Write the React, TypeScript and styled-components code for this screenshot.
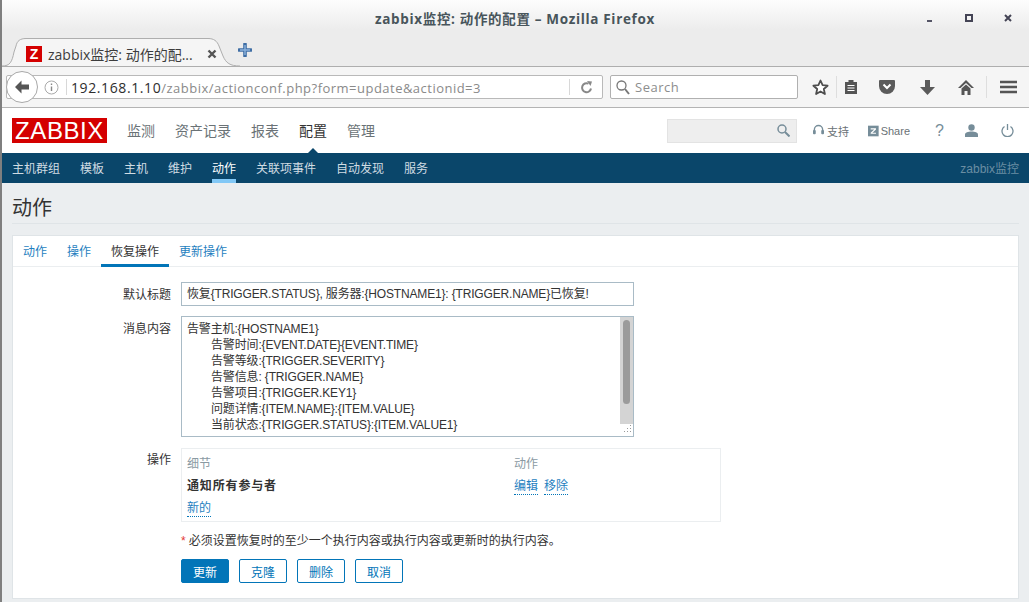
import React from 'react';
import styled, { createGlobalStyle } from 'styled-components';

const UI = `"Liberation Sans", "Noto Sans CJK SC", sans-serif`;
const CHROME = `"Open Sans", "Noto Sans CJK SC", sans-serif`;

const GlobalStyle = createGlobalStyle`
  html, body { margin: 0; padding: 0; height: 100%; overflow: hidden; background: #ebeef0; }
  * { box-sizing: border-box; }
`;

const Page = styled.div`
  position: relative;
  width: 1029px;
  height: 602px;
  display: flex;
  flex-direction: column;
  overflow: hidden;
  font-family: ${UI};
  border-left: 2px solid #7f7f7f;

  &::before,
  &::after {
    content: '';
    position: absolute;
    left: -2px;
    width: 2px;
    background: #454545;
  }
  &::before { top: 63px; height: 7px; }
  &::after { top: 434px; height: 16px; }
`;

/* ---- firefox chrome ---- */
const TitleArea = styled.div`
  height: 67px;
  background: linear-gradient(#fdfdfd 0, #ececec 30px, #ececec 100%);
  border-bottom: 1px solid #aeaeae;
  display: flex;
  flex-direction: column;
`;

const TitleBar = styled.div`
  height: 37px;
  padding: 0 16px 1px 2px;
  display: flex;
  align-items: center;
`;

const WindowTitle = styled.div`
  flex: 1;
  text-align: center;
  font: 700 13.5px ${CHROME};
  letter-spacing: 0.66px;
  color: #48555b;
  padding-left: 101px;
`;

const WindowButtons = styled.div`
  display: flex;
  align-items: center;
  gap: 29px;
  color: #4a5a62;
`;

const TabStrip = styled.div`
  flex: 1;
  display: flex;
  align-items: flex-end;
`;

const BrowserTab = styled.div`
  position: relative;
  width: 230px;
  height: 29px;
  margin-bottom: -1px;
  padding: 2px 15px 0 24px;
  display: flex;
  align-items: center;
  font: 400 14px ${CHROME};
  color: #3d3d3d;
  svg.shape { position: absolute; left: 0; top: 0; overflow: visible; }
`;

const Favicon = styled.span`
  position: relative;
  width: 16px;
  height: 16px;
  margin-right: 6px;
  background: #d40000;
  color: #fff;
  font: 700 14px/16px ${UI};
  text-align: center;
  flex-shrink: 0;
`;

const TabLabel = styled.span`
  position: relative;
  flex: 1;
  white-space: nowrap;
`;

const TabClose = styled.svg`
  position: relative;
  flex-shrink: 0;
`;

const NewTab = styled.svg`
  margin: 0 0 9px 6px;
`;

const NavBar = styled.div`
  height: 41px;
  padding: 8px 0 0 4px;
  background: #f5f5f5;
  border-bottom: 1px solid #b4b4b4;
  display: flex;
  align-items: flex-start;
`;

const UrlBox = styled.div`
  position: relative;
  width: 597px;
  height: 24px;
  background: #fff;
  border: 1px solid #b9b9b9;
  border-radius: 2px;
  padding-left: 37px;
  display: flex;
  align-items: center;
  font: 400 13px ${CHROME};
  letter-spacing: 0.48px;
  color: #8a8a8a;
  white-space: nowrap;
`;

const BackCircle = styled.span`
  position: absolute;
  left: -1px;
  top: -5px;
  width: 32px;
  height: 32px;
  border-radius: 50%;
  background: #fff;
  border: 1px solid #a8a8a8;
  display: flex;
  align-items: center;
  justify-content: center;
`;

const InfoIcon = styled.svg`
  margin-right: 7px;
  flex-shrink: 0;
`;

const UrlDivider = styled.span<{ $side: 'l' | 'r' }>`
  width: 1px;
  height: 16px;
  background: #d8d8d8;
  margin-right: ${p => (p.$side === 'l' ? '4px' : '10px')};
`;

const Host = styled.span`
  font-size: 14px;
  letter-spacing: 0.6px;
  color: #2e2e2e;
`;

const UrlEnd = styled.div`
  margin-left: auto;
  display: flex;
  align-items: center;
  padding-right: 9px;
`;

const SearchBox = styled.div`
  width: 188px;
  height: 24px;
  margin-left: 7px;
  background: #fff;
  border: 1px solid #b0b0b0;
  border-radius: 2px;
  padding-left: 5px;
  display: flex;
  align-items: center;
  gap: 5px;
  font: 400 13px ${CHROME};
  letter-spacing: 0.5px;
  color: #8d8d8d;
`;

const ToolIcons = styled.div`
  flex: 1;
  height: 24px;
  display: flex;
  align-items: center;
  color: #5a5a5a;
  position: relative;
`;

const ToolSlot = styled.span<{ $w: number; $pad?: number }>`
  width: ${p => p.$w}px;
  padding-left: ${p => p.$pad ?? 0}px;
  display: flex;
  justify-content: center;
`;

const ToolSep = styled.span`
  width: 1px;
  height: 22px;
  background: #dedede;
`;

/* ---- zabbix header ---- */
const TopNav = styled.div`
  height: 45px;
  background: #fff;
  padding: 0 0 0 10px;
  display: flex;
  align-items: center;
`;

const Logo = styled.div`
  width: 95px;
  height: 25px;
  margin: 0 20px 1px 0;
  background: #d40000;
  color: #fff;
  font: 400 24px/25px ${UI};
  letter-spacing: 0.6px;
  text-align: center;
`;

const MainMenu = styled.div`
  display: flex;
  gap: 20px;
  margin-bottom: 1px;
`;

const MainItem = styled.span<{ $active?: boolean }>`
  position: relative;
  font-size: 14px;
  color: ${p => (p.$active ? '#333' : '#6a7276')};
  ${p =>
    p.$active &&
    `&::after {
      content: '';
      position: absolute;
      left: 8px;
      bottom: -14px;
      border: 6px solid transparent;
      border-top: 0;
      border-bottom-color: #0a466a;
    }`}
`;

const TopRight = styled.div`
  margin-left: auto;
  padding-right: 6px;
  display: flex;
  align-items: center;
  color: #768d99;
  font-size: 12px;
`;

const SearchField = styled.div`
  width: 130px;
  height: 24px;
  margin-right: 16px;
  background: #eeeeee;
  border: 1px solid #e3e3e3;
  padding-right: 6px;
  display: flex;
  align-items: center;
  justify-content: flex-end;
`;

const HelpLink = styled.span<{ $w: number; $gap: number }>`
  width: ${p => p.$w}px;
  display: flex;
  align-items: center;
  gap: ${p => p.$gap}px;
  color: #6a7276;
  font-size: 11px;
`;

const Qmark = styled.span`
  font-size: 16px;
  color: #768d99;
  width: 30px;
  margin-left: 25px;
  display: block;
`;

const IconSlot = styled.span<{ $w: number }>`
  width: ${p => p.$w}px;
  display: flex;
  align-items: center;
`;

const SubNav = styled.div`
  height: 30px;
  background: #0a466a;
  padding: 0 10px;
  display: flex;
  align-items: stretch;
  gap: 20px;
`;

const SubItem = styled.span<{ $active?: boolean }>`
  font-size: 12px;
  line-height: 33px;
  color: ${p => (p.$active ? '#fff' : '#d0dce3')};
  border-bottom: 4px solid ${p => (p.$active ? '#82c8f6' : 'transparent')};
`;

const Server = styled.span`
  margin-left: auto;
  font-size: 12px;
  line-height: 33px;
  color: #6b8ea3;
`;

const Content = styled.div`
  flex: 1;
  padding: 0 10px;
  background: #ebeef0;
`;

const Heading = styled.h1`
  margin: 0 0 11px;
  height: 41px;
  font-size: 20px;
  font-weight: 400;
  line-height: 50px;
  color: #333;
  border-bottom: 1px solid #dfe4e7;
`;

const Card = styled.div`
  height: 364px;
  background: #fff;
  border: 1px solid #dfe4e7;
`;

const Tabs = styled.div`
  height: 31px;
  padding-left: 0;
  border-bottom: 1px solid #ebeef0;
  display: flex;
`;

const TabItem = styled.span<{ $active?: boolean }>`
  height: 31px;
  padding: 0 10px;
  font-size: 12px;
  line-height: 33px;
  color: ${p => (p.$active ? '#333' : '#1f7fbf')};
  border-bottom: 3px solid ${p => (p.$active ? '#0275b8' : 'transparent')};
`;

const Form = styled.div`
  padding-top: 15px;
  display: grid;
  grid-template-columns: 158px auto;
  column-gap: 10px;
  row-gap: 10px;
  justify-content: start;
`;

const Label = styled.label`
  font-size: 12px;
  color: #333;
  text-align: right;
  padding-top: 3px;
`;

const TextInput = styled.div`
  width: 453px;
  height: 24px;
  border: 1px solid #a9bbc6;
  padding: 0 5px;
  font-size: 12px;
  line-height: 22px;
  letter-spacing: -0.17px;
  color: #333;
  white-space: nowrap;
`;

const TextAreaBox = styled.div`
  position: relative;
  width: 453px;
  height: 121px;
  border: 1px solid #a9bbc6;
  display: flex;
`;

const TextBody = styled.div`
  flex: 1;
  padding: 4px 5px;
  font-size: 12px;
  line-height: 16px;
  letter-spacing: -0.15px;
  color: #333;
  white-space: pre;
  tab-size: 24px;
  overflow: hidden;
`;

const Scrollbar = styled.div`
  width: 13px;
  height: 107px;
  background: #d4d4d4;
  padding: 3px 3px 0;
`;

const Thumb = styled.div`
  width: 7px;
  height: 84px;
  background: #9b9b9b;
  border-radius: 4px;
`;

const Grip = styled.svg`
  position: absolute;
  right: 1px;
  bottom: 1px;
`;

const OpsTable = styled.div`
  width: 540px;
  height: 74px;
  border: 1px solid #ebeef0;
  padding: 5px 5px 0;
  display: grid;
  grid-template-columns: 327px auto;
  grid-auto-rows: 22px;
  font-size: 12px;
  margin-top: 1px;
`;

const HeadCell = styled.span`
  color: #8a9aa3;
  line-height: 20px;
`;

const Bold = styled.b`
  color: #333;
  line-height: 20px;
  letter-spacing: 0.85px;
`;

const Actions = styled.span`
  display: flex;
  gap: 6px;
  line-height: 22px;
`;

const LinkText = styled.span`
  align-self: start;
  justify-self: start;
  color: #1f7fbf;
  line-height: 15px;
  margin-top: 3px;
  border-bottom: 1px dotted #0275b8;
`;

const Note = styled.div`
  grid-column: 2;
  font-size: 12px;
  line-height: 16px;
  color: #333;
  margin-top: 1px;
`;

const Star = styled.span`
  color: #e33734;
  margin-right: 3px;
`;

const ButtonRow = styled.div`
  grid-column: 2;
  display: flex;
  gap: 10px;
`;

const Btn = styled.button<{ $primary?: boolean }>`
  width: 48px;
  height: 24px;
  padding: 0;
  font: 400 12px ${UI};
  border-radius: 2px;
  border: 1px solid #0275b8;
  background: ${p => (p.$primary ? '#0275b8' : '#fff')};
  color: ${p => (p.$primary ? '#fff' : '#0275b8')};
`;

const Blank = styled.span``;

const MESSAGE = `告警主机:{HOSTNAME1}
\t告警时间:{EVENT.DATE}{EVENT.TIME}
\t告警等级:{TRIGGER.SEVERITY}
\t告警信息: {TRIGGER.NAME}
\t告警项目:{TRIGGER.KEY1}
\t问题详情:{ITEM.NAME}:{ITEM.VALUE}
\t当前状态:{TRIGGER.STATUS}:{ITEM.VALUE1}`;

const App: React.FC = () => {
  return (
    <Page>
      <GlobalStyle />
      <TitleArea>
        <TitleBar>
          <WindowTitle>zabbix监控: 动作的配置 – Mozilla Firefox</WindowTitle>
          <WindowButtons>
            <svg width="10" height="10" viewBox="0 0 10 10"><rect x="2" y="7" width="5" height="2" fill="#556" /></svg>
            <svg width="10" height="10" viewBox="0 0 10 10"><rect x="2" y="2" width="6" height="6" fill="none" stroke="#445" strokeWidth="2" /></svg>
            <svg width="10" height="10" viewBox="0 0 10 10"><path d="M2 2l6 6M8 2l-6 6" stroke="#445" strokeWidth="2" /></svg>
          </WindowButtons>
        </TitleBar>
        <TabStrip>
          <BrowserTab>
            <svg className="shape" width="240" height="29" viewBox="0 0 240 29">
              <path d="M0 28C8 28 10 24 12 14L14 8C15 3 18 .5 24 .5H206C212 .5 215 3 217 8L221 18C224 25 228 28 238 28" fill="#f5f5f5" stroke="#aeaeae" />
            </svg>
            <Favicon>Z</Favicon>
            <TabLabel>zabbix监控: 动作的配...</TabLabel>
            <TabClose width="10" height="10" viewBox="0 0 10 10"><path d="M1.500 1.500l7 7M8.500 1.500l-7 7" stroke="#555" strokeWidth="2.400" /></TabClose>
          </BrowserTab>
          <NewTab width="14" height="14" viewBox="0 0 14 14"><path d="M7 1v12M1 7h12" stroke="#3f6ea5" strokeWidth="3.600" strokeLinecap="round" /><path d="M7 2v10M2 7h10" stroke="#8db3dc" strokeWidth="1.400" /></NewTab>
        </TabStrip>
      </TitleArea>

      <NavBar>
        <UrlBox>
          <BackCircle>
            <svg width="16" height="14" viewBox="0 0 16 14"><path d="M7.500 .5L1 7l6.500 6.500V9.500H15v-5H7.500z" fill="#555" /></svg>
          </BackCircle>
          <InfoIcon width="15" height="15" viewBox="0 0 15 15"><circle cx="7.500" cy="7.500" r="6.500" fill="none" stroke="#aaa" /><path d="M7.500 6.500v4.500M7.500 3.500v1.600" stroke="#888" strokeWidth="1.400" /></InfoIcon>
          <UrlDivider $side="l" />
          <span><Host>192.168.1.10</Host>/zabbix/actionconf.php?form=update&amp;actionid=3</span>
          <UrlEnd>
            <UrlDivider $side="r" />
            <svg width="13" height="13" viewBox="0 0 13 13"><path d="M11 7.500A4.500 4.500 0 1 1 8.500 2.600" fill="none" stroke="#888" strokeWidth="2" /><path d="M7 0l5 .5-1.500 4.500z" fill="#888" /></svg>
          </UrlEnd>
        </UrlBox>
        <SearchBox>
          <svg width="14" height="15" viewBox="0 0 14 15"><circle cx="5.500" cy="5.500" r="4.500" fill="none" stroke="#777" strokeWidth="1.300" /><path d="M9 9l4 5" stroke="#777" strokeWidth="2" /></svg>
          Search
        </SearchBox>
        <ToolIcons>
          <ToolSlot $w={38} $pad={6}>
            <svg width="17" height="17" viewBox="0 0 17 17"><path d="M8.500 1.500l2.100 4.700 5 .5-3.800 3.300 1.100 5-4.400-2.600-4.400 2.600 1.100-5L1.400 6.700l5-.5z" fill="#fff" stroke="#4d4d4d" strokeWidth="1.800" strokeLinejoin="round" /></svg>
          </ToolSlot>
          <ToolSep />
          <ToolSlot $w={28}>
            <svg width="14" height="16" viewBox="0 0 14 16"><path d="M1 3h3.500V1h5v2H13v12H1z" fill="#555" /><path d="M3.500 6.500h7M3.500 9h7M3.500 11.500h7" stroke="#fff" /></svg>
          </ToolSlot>
          <ToolSlot $w={44}>
            <svg width="16" height="14" viewBox="0 0 16 14"><path d="M1 0h14a1 1 0 0 1 1 1v5a8 8 0 0 1-16 0V1a1 1 0 0 1 1-1z" fill="#5b5b5b" /><path d="M4.500 4.500L8 8l3.500-3.500" fill="none" stroke="#fff" strokeWidth="2" /></svg>
          </ToolSlot>
          <ToolSlot $w={36}>
            <svg width="15" height="15" viewBox="0 0 15 15"><path d="M5 0h5v7h5l-7.500 8L0 7h5z" fill="#5a5a5a" /></svg>
          </ToolSlot>
          <ToolSlot $w={41}>
            <svg width="16" height="15" viewBox="0 0 16 15"><path d="M8 0L0 8h2.500L8 3l5.500 5H16z" fill="#555" /><path d="M3.500 8.500L8 4.500l4.500 4V15h-3v-4h-3v4h-3z" fill="#555" /></svg>
          </ToolSlot>
          <ToolSep />
          <ToolSlot $w={42}>
            <svg width="17" height="14" viewBox="0 0 17 14"><path d="M0 2h17M0 7h17M0 12h17" stroke="#555" strokeWidth="2.400" /></svg>
          </ToolSlot>
        </ToolIcons>
      </NavBar>

      <TopNav>
        <Logo>ZABBIX</Logo>
        <MainMenu>
          <MainItem>监测</MainItem>
          <MainItem>资产记录</MainItem>
          <MainItem>报表</MainItem>
          <MainItem $active>配置</MainItem>
          <MainItem>管理</MainItem>
        </MainMenu>
        <TopRight>
          <SearchField>
            <svg width="13" height="13" viewBox="0 0 13 13"><circle cx="5" cy="5" r="4" fill="none" stroke="#768d99" strokeWidth="1.500" /><path d="M8 8l4.500 4.500" stroke="#768d99" strokeWidth="2" /></svg>
          </SearchField>
          <HelpLink $w={55} $gap={3}>
            <svg width="11" height="13" viewBox="0 0 12 13"><path d="M1.500 8V5.500a4.500 4.500 0 0 1 9 0V8" fill="none" stroke="#768d99" strokeWidth="1.500" /><rect x="0" y="6" width="3" height="4.500" rx="1" fill="#768d99" /><rect x="9" y="6" width="3" height="4.500" rx="1" fill="#768d99" /></svg>
            支持
          </HelpLink>
          <HelpLink $w={42} $gap={2}>
            <svg width="12" height="12" viewBox="0 0 12 12"><rect width="12" height="12" fill="#768d99" /><path d="M3 3h6v1.200L5 8h4v1.200H3V8l4-3.800H3z" fill="#fff" /></svg>
            Share
          </HelpLink>
          <Qmark>?</Qmark>
          <IconSlot $w={36}>
            <svg width="13" height="13" viewBox="0 0 13 13"><circle cx="6.500" cy="3.500" r="3.200" fill="#768d99" /><path d="M0 13v-2.500C0 8.500 3 7.500 6.500 7.500S13 8.500 13 10.500V13z" fill="#768d99" /></svg>
          </IconSlot>
          <IconSlot $w={22}>
            <svg width="13" height="13" viewBox="0 0 13 13"><path d="M3.500 2.500a5.500 5.500 0 1 0 6 0" fill="none" stroke="#768d99" strokeWidth="1.300" /><path d="M6.500 0v6" stroke="#768d99" strokeWidth="1.300" /></svg>
          </IconSlot>
        </TopRight>
      </TopNav>

      <SubNav>
        <SubItem>主机群组</SubItem>
        <SubItem>模板</SubItem>
        <SubItem>主机</SubItem>
        <SubItem>维护</SubItem>
        <SubItem $active>动作</SubItem>
        <SubItem>关联项事件</SubItem>
        <SubItem>自动发现</SubItem>
        <SubItem>服务</SubItem>
        <Server>zabbix监控</Server>
      </SubNav>

      <Content>
        <Heading>动作</Heading>
        <Card>
          <Tabs>
            <TabItem>动作</TabItem>
            <TabItem>操作</TabItem>
            <TabItem $active>恢复操作</TabItem>
            <TabItem>更新操作</TabItem>
          </Tabs>
          <Form>
            <Label>默认标题</Label>
            <TextInput>恢复{'{TRIGGER.STATUS}'}, 服务器:{'{HOSTNAME1}'}: {'{TRIGGER.NAME}'}已恢复!</TextInput>
            <Label>消息内容</Label>
            <TextAreaBox>
              <TextBody>{MESSAGE}</TextBody>
              <Scrollbar><Thumb /></Scrollbar>
              <Grip width="11" height="11" viewBox="0 0 11 11">
                <path d="M9 1h1v1H9zM6 4h1v1H6zM9 4h1v1H9zM3 7h1v1H3zM6 7h1v1H6zM9 7h1v1H9z" fill="#999" />
              </Grip>
            </TextAreaBox>
            <Label>操作</Label>
            <OpsTable>
              <HeadCell>细节</HeadCell>
              <HeadCell>动作</HeadCell>
              <Bold>通知所有参与者</Bold>
              <Actions>
                <LinkText>编辑</LinkText>
                <LinkText>移除</LinkText>
              </Actions>
              <LinkText>新的</LinkText>
              <Blank />
            </OpsTable>
            <Note><Star>*</Star>必须设置恢复时的至少一个执行内容或执行内容或更新时的执行内容。</Note>
            <ButtonRow>
              <Btn $primary>更新</Btn>
              <Btn>克隆</Btn>
              <Btn>删除</Btn>
              <Btn>取消</Btn>
            </ButtonRow>
          </Form>
        </Card>
      </Content>
    </Page>
  );
};

export default App;
